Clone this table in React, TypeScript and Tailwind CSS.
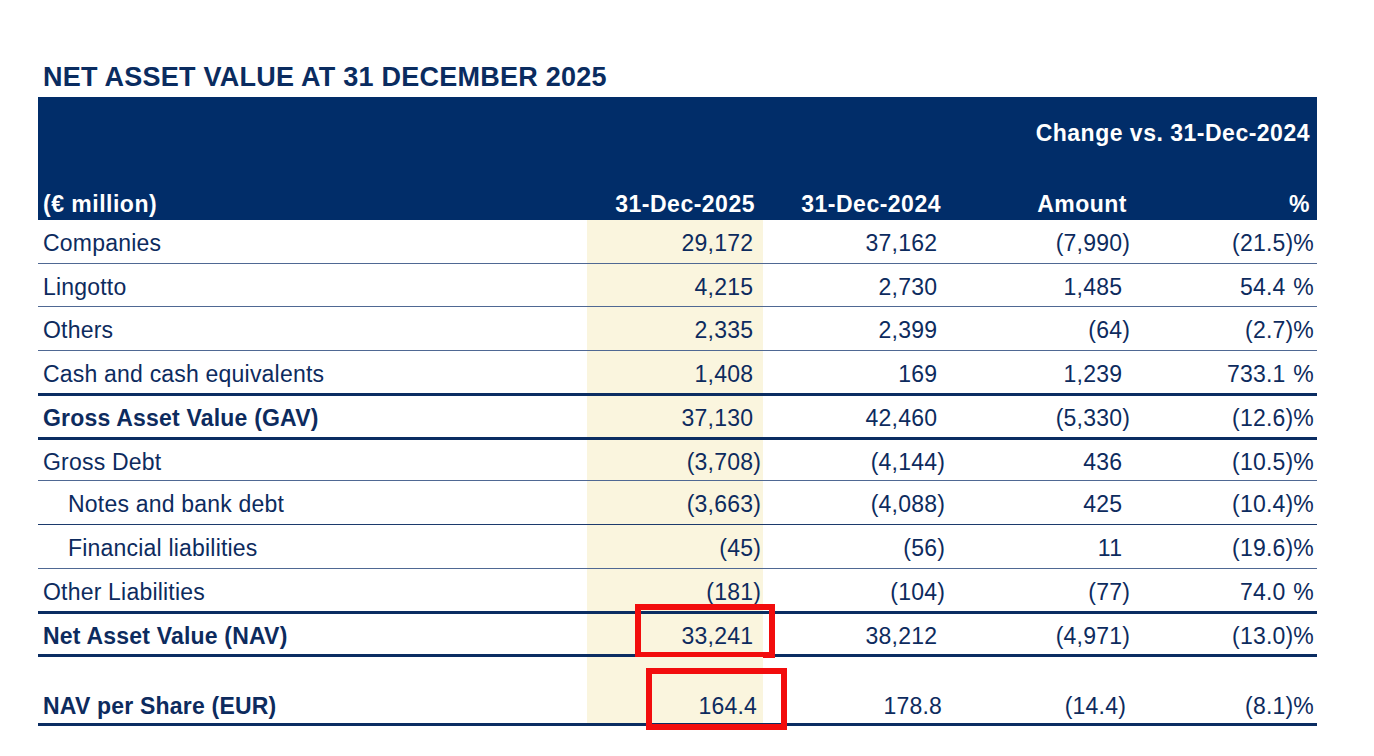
import React from "react";

interface Row {
  label: string;
  values: string[];
  bold?: boolean;
  indent?: boolean;
  rowClass: string;
  mark?: "nav" | "share";
}

const rows: Row[] = [
  { label: "Companies", values: ["29,172", "37,162", "(7,990)", "(21.5)%"], rowClass: "h-[44px] border-b border-[#4f6893]" },
  { label: "Lingotto", values: ["4,215", "2,730", "1,485", "54.4 %"], rowClass: "h-[43px] border-b border-[#4f6893]" },
  { label: "Others", values: ["2,335", "2,399", "(64)", "(2.7)%"], rowClass: "h-[44px] border-b border-[#4f6893]" },
  { label: "Cash and cash equivalents", values: ["1,408", "169", "1,239", "733.1 %"], rowClass: "h-[45px] border-b-[3px] border-[#0b2d62]" },
  { label: "Gross Asset Value (GAV)", values: ["37,130", "42,460", "(5,330)", "(12.6)%"], bold: true, rowClass: "h-[44px] border-b-[3px] border-[#0b2d62]" },
  { label: "Gross Debt", values: ["(3,708)", "(4,144)", "436", "(10.5)%"], rowClass: "h-[41px] border-b border-[#4f6893]" },
  { label: "Notes and bank debt", values: ["(3,663)", "(4,088)", "425", "(10.4)%"], indent: true, rowClass: "h-[44px] border-b border-[#1c3a6c]" },
  { label: "Financial liabilities", values: ["(45)", "(56)", "11", "(19.6)%"], indent: true, rowClass: "h-[44px] border-b border-[#4f6893]" },
  { label: "Other Liabilities", values: ["(181)", "(104)", "(77)", "74.0 %"], rowClass: "h-[45px] border-b-[3px] border-[#0b2d62]" },
  { label: "Net Asset Value (NAV)", values: ["33,241", "38,212", "(4,971)", "(13.0)%"], bold: true, mark: "nav", rowClass: "h-[43px] border-b-[3px] border-[#0b2d62]" },
  { label: "NAV per Share (EUR)", values: ["164.4", "178.8", "(14.4)", "(8.1)%"], bold: true, mark: "share", rowClass: "h-[69px] border-b-[3px] border-[#0b2d62]" },
];

// keeps positive figures lined up with the ones in brackets
const Figure = ({ v }: { v: string }) => {
  if (v.endsWith(" %")) {
    return (
      <>
        {v.slice(0, -2)}
        <span className="invisible">)</span>%
      </>
    );
  }
  if (v.startsWith("(") || v.endsWith("%")) return <>{v}</>;
  return (
    <>
      {v}
      <span className="invisible">)</span>
    </>
  );
};

const grid = "grid grid-cols-[549px_176px_185px_185px_184px]";

export default function App() {
  return (
    <div className="w-[1374px] h-[756px] bg-white pt-[62px] pl-[38px] font-['Liberation_Sans',Arial,sans-serif] text-[#0d2b5e]">
      <h1 className="pl-[5px] text-[27px] leading-[30px] font-bold tracking-[0.25px] text-[#0a2c60]">
        NET ASSET VALUE AT 31 DECEMBER 2025
      </h1>

      <div className="w-[1279px] mt-[5px]">
        <div className="h-[123px] bg-[#012d69] text-white font-bold text-[23px] leading-[28px] tracking-[0.5px] flex flex-col justify-between pt-[22px] pb-[2px]">
          <div className={grid}>
            <div className="col-start-4 col-span-2 text-right pr-[7px] whitespace-nowrap">Change vs. 31-Dec-2024</div>
          </div>
          <div className={grid}>
            <div className="pl-[5px]">(€ million)</div>
            <div className="text-right pr-[8px]">31-Dec-2025</div>
            <div className="text-right pr-[7px]">31-Dec-2024</div>
            <div className="text-right pr-[6px]">Amount</div>
            <div className="text-right pr-[7px]">%</div>
          </div>
        </div>

        {rows.map((row) => {
          const last = row.mark === "share";
          return (
            <div key={row.label} className={`${grid} ${row.rowClass} text-[23px] leading-[28px] tracking-[0.2px]`}>
              <div
                className={`flex ${last ? "items-end pb-[3px]" : "items-center pt-[3px]"} ${
                  row.indent ? "pl-[30px]" : "pl-[5px]"
                } ${row.bold ? "font-bold" : ""}`}
              >
                {row.label}
              </div>
              <div
                className={`relative bg-[#faf5de] flex justify-end ${last ? "items-end pb-[3px] pr-[6px]" : "items-center pt-[3px] pr-[2px]"}`}
              >
                {last ? row.values[0] : <Figure v={row.values[0]} />}
                {row.mark === "nav" && (
                  <div className="absolute left-[48px] -right-[12px] -top-[10px] -bottom-[4px] border-[6px] border-[#f20d0d]" />
                )}
                {row.mark === "share" && (
                  <div className="absolute left-[59px] -right-[24px] top-[11px] -bottom-[7px] border-[6px] border-[#f20d0d]" />
                )}
              </div>
              <div className={`flex justify-end ${last ? "items-end pb-[3px] pr-[6px]" : "items-center pt-[3px] pr-[3px]"}`}>
                {last ? row.values[1] : <Figure v={row.values[1]} />}
              </div>
              <div className={`flex justify-end ${last ? "items-end pb-[3px] pr-[7px]" : "items-center pt-[3px] pr-[3px]"}`}>
                <Figure v={row.values[2]} />
              </div>
              <div className={`flex justify-end ${last ? "items-end pb-[3px]" : "items-center pt-[3px]"} pr-[3px]`}>
                <Figure v={row.values[3]} />
              </div>
            </div>
          );
        })}
      </div>
    </div>
  );
}
